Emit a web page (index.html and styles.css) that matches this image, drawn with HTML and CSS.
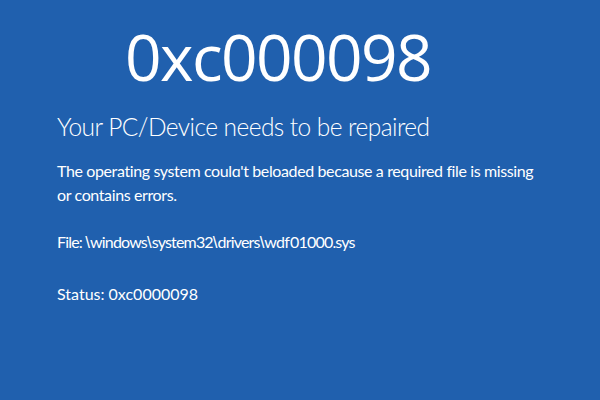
FILE: index.html
```html
<!DOCTYPE html>
<html>
<head>
<meta charset="utf-8">
<link rel="stylesheet" href="styles.css">
</head>
<body>
<main class="screen">
  <div class="code">0xc000098</div>
  <h1 class="headline">Your PC/Device needs to be repaired</h1>
  <p class="message">The operating system coulɑ't beloaded because a required file is missing<br>or contains errors.</p>
  <p class="file">File: <span class="bs">\</span>windows<span class="bs">\</span>system32<span class="bs">\</span>drivers<span class="bs">\</span>wdf&thinsp;01000.sys</p>
  <p class="status">Status: 0xc0000098</p>
</main>
</body>
</html>
```
FILE: styles.css
```css
html, body {
  margin: 0;
  padding: 0;
  background: #2060ae;
}
.screen {
  width: 600px;
  height: 400px;
  box-sizing: border-box;
  padding: 21px 0 0 57px;
  color: #ffffff;
  font-family: "Open Sans", "Noto Sans", sans-serif;
}
.code {
  margin-left: 68px;
  font-size: 64px;
  line-height: 72px;
  letter-spacing: -1.6px;
}
.headline {
  margin: 18px 0 0 0;
  font-family: "Lato", "Open Sans", sans-serif;
  font-weight: 300;
  font-size: 24.5px;
  line-height: 32px;
  letter-spacing: -0.55px;
}
.message,
.file,
.status {
  font-family: "Lato", "Open Sans", sans-serif;
  font-size: 16px;
  line-height: 24px;
  letter-spacing: -0.38px;
}
.message {
  margin: 16px 0 0 0;
}
.file {
  margin: 23px 0 0 0;
  letter-spacing: -0.82px;
}
.bs {
  font-family: "Liberation Sans", sans-serif;
  font-size: 17px;
  letter-spacing: 0;
}
.status {
  margin: 27px 0 0 0;
  letter-spacing: 0;
}
```
